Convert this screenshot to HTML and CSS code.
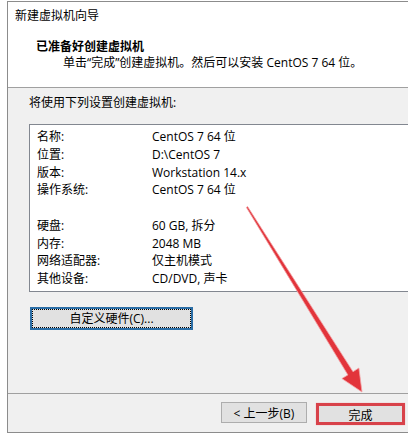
FILE: index.html
```html
<!DOCTYPE html>
<html lang="zh-CN">
<head>
    <meta charset="UTF-8">
    <meta name="viewport" content="width=device-width, initial-scale=1.0">
    <title>新建虚拟机向导</title>
    <link rel="stylesheet" href="styles.css">
</head>
<body>
    <div class="wizard">
        <!-- Header -->
        <div class="head">
            <div class="title">新建虚拟机向导</div>
            <div class="heading">已准备好创建虚拟机</div>
            <div class="subheading">单击“完成”创建虚拟机。然后可以安装 CentOS 7 64 位。</div>
        </div>

        <!-- Summary -->
        <div class="content">
            <p class="intro">将使用下列设置创建虚拟机:</p>
            <div class="summary">
                <div class="row"><span class="label">名称:</span><span>CentOS 7 64 位</span></div>
                <div class="row"><span class="label">位置:</span><span>D:\CentOS 7</span></div>
                <div class="row"><span class="label">版本:</span><span>Workstation 14.x</span></div>
                <div class="row"><span class="label">操作系统:</span><span>CentOS 7 64 位</span></div>
                <div class="row"></div>
                <div class="row"><span class="label">硬盘:</span><span>60 GB, 拆分</span></div>
                <div class="row"><span class="label">内存:</span><span>2048 MB</span></div>
                <div class="row"><span class="label">网络适配器:</span><span>仅主机模式</span></div>
                <div class="row"><span class="label">其他设备:</span><span>CD/DVD, 声卡</span></div>
            </div>
            <button class="custom">自定义硬件(C)...</button>
        </div>

        <!-- Buttons -->
        <div class="footer">
            <button class="back">&lt; 上一步(B)</button>
            <button class="finish">完成</button>
        </div>
    </div>

    <!-- Pointer arrow -->
    <svg class="arrow" width="408" height="440" viewBox="0 0 408 440">
        <polygon points="247.6,206.6 353,371.7 358.9,368 362,392 341.9,378.6 347.9,374.9 246.4,207.4"
                 fill="#e2343b" stroke="#f3a3a6" stroke-width="0.8" stroke-linejoin="round"/>
    </svg>
</body>
</html>
```

FILE: styles.css
```css
body {
    margin: 0;
    padding: 0;
    background: #fff;
    font-family: "Open Sans", "Noto Sans CJK SC", sans-serif;
    font-size: 12px;
    color: #000;
}
.wizard {
    margin: 1px 0 0 7px;
    border: 1px solid #8c8c8c;
    border-right: none;
    background: #f0f0f0;
}
.head {
    background: #fff;
    padding: 6px 0 16px;
    border-bottom: 1px solid #a0a0a0;
    line-height: 16px;
}
.title {
    padding-left: 7px;
}
.heading {
    margin-top: 15px;
    padding-left: 28px;
    font-weight: bold;
}
.subheading {
    padding-left: 55px;
}
.content {
    height: 305px;
    padding: 7px 0 0 21px;
    box-sizing: border-box;
}
.intro {
    margin: 0 0 13px;
    line-height: 16px;
}
.summary {
    background: #fff;
    border: 1px solid #828790;
    border-right: none;
    padding: 3px 0 3px 7px;
}
.row {
    display: flex;
    height: 17.75px;
    line-height: 17.75px;
}
.label {
    width: 115px;
}
button {
    font-family: inherit;
    font-size: 12px;
    color: #000;
    background: #e1e1e1;
    padding: 0;
    cursor: pointer;
}
.custom {
    margin: 15px 0 0 1px;
    width: 163px;
    height: 23px;
    border: 2px solid #2b6ea6;
    outline: 1px dotted #000;
    outline-offset: -3px;
}
.footer {
    height: 38px;
    border-top: 1px solid #a0a0a0;
    display: flex;
    align-items: flex-start;
    justify-content: flex-end;
    padding-right: 3px;
}
.back {
    margin-top: 8px;
    width: 86px;
    height: 21px;
    border: 1px solid #adadad;
}
.finish {
    margin: 9px 0 0 9px;
    width: 89px;
    height: 22px;
    border: 3px solid #d8424a;
    box-shadow: 0 0 1px #f2a0a4;
}
.arrow {
    position: absolute;
    top: 0;
    left: 0;
    pointer-events: none;
}
```
